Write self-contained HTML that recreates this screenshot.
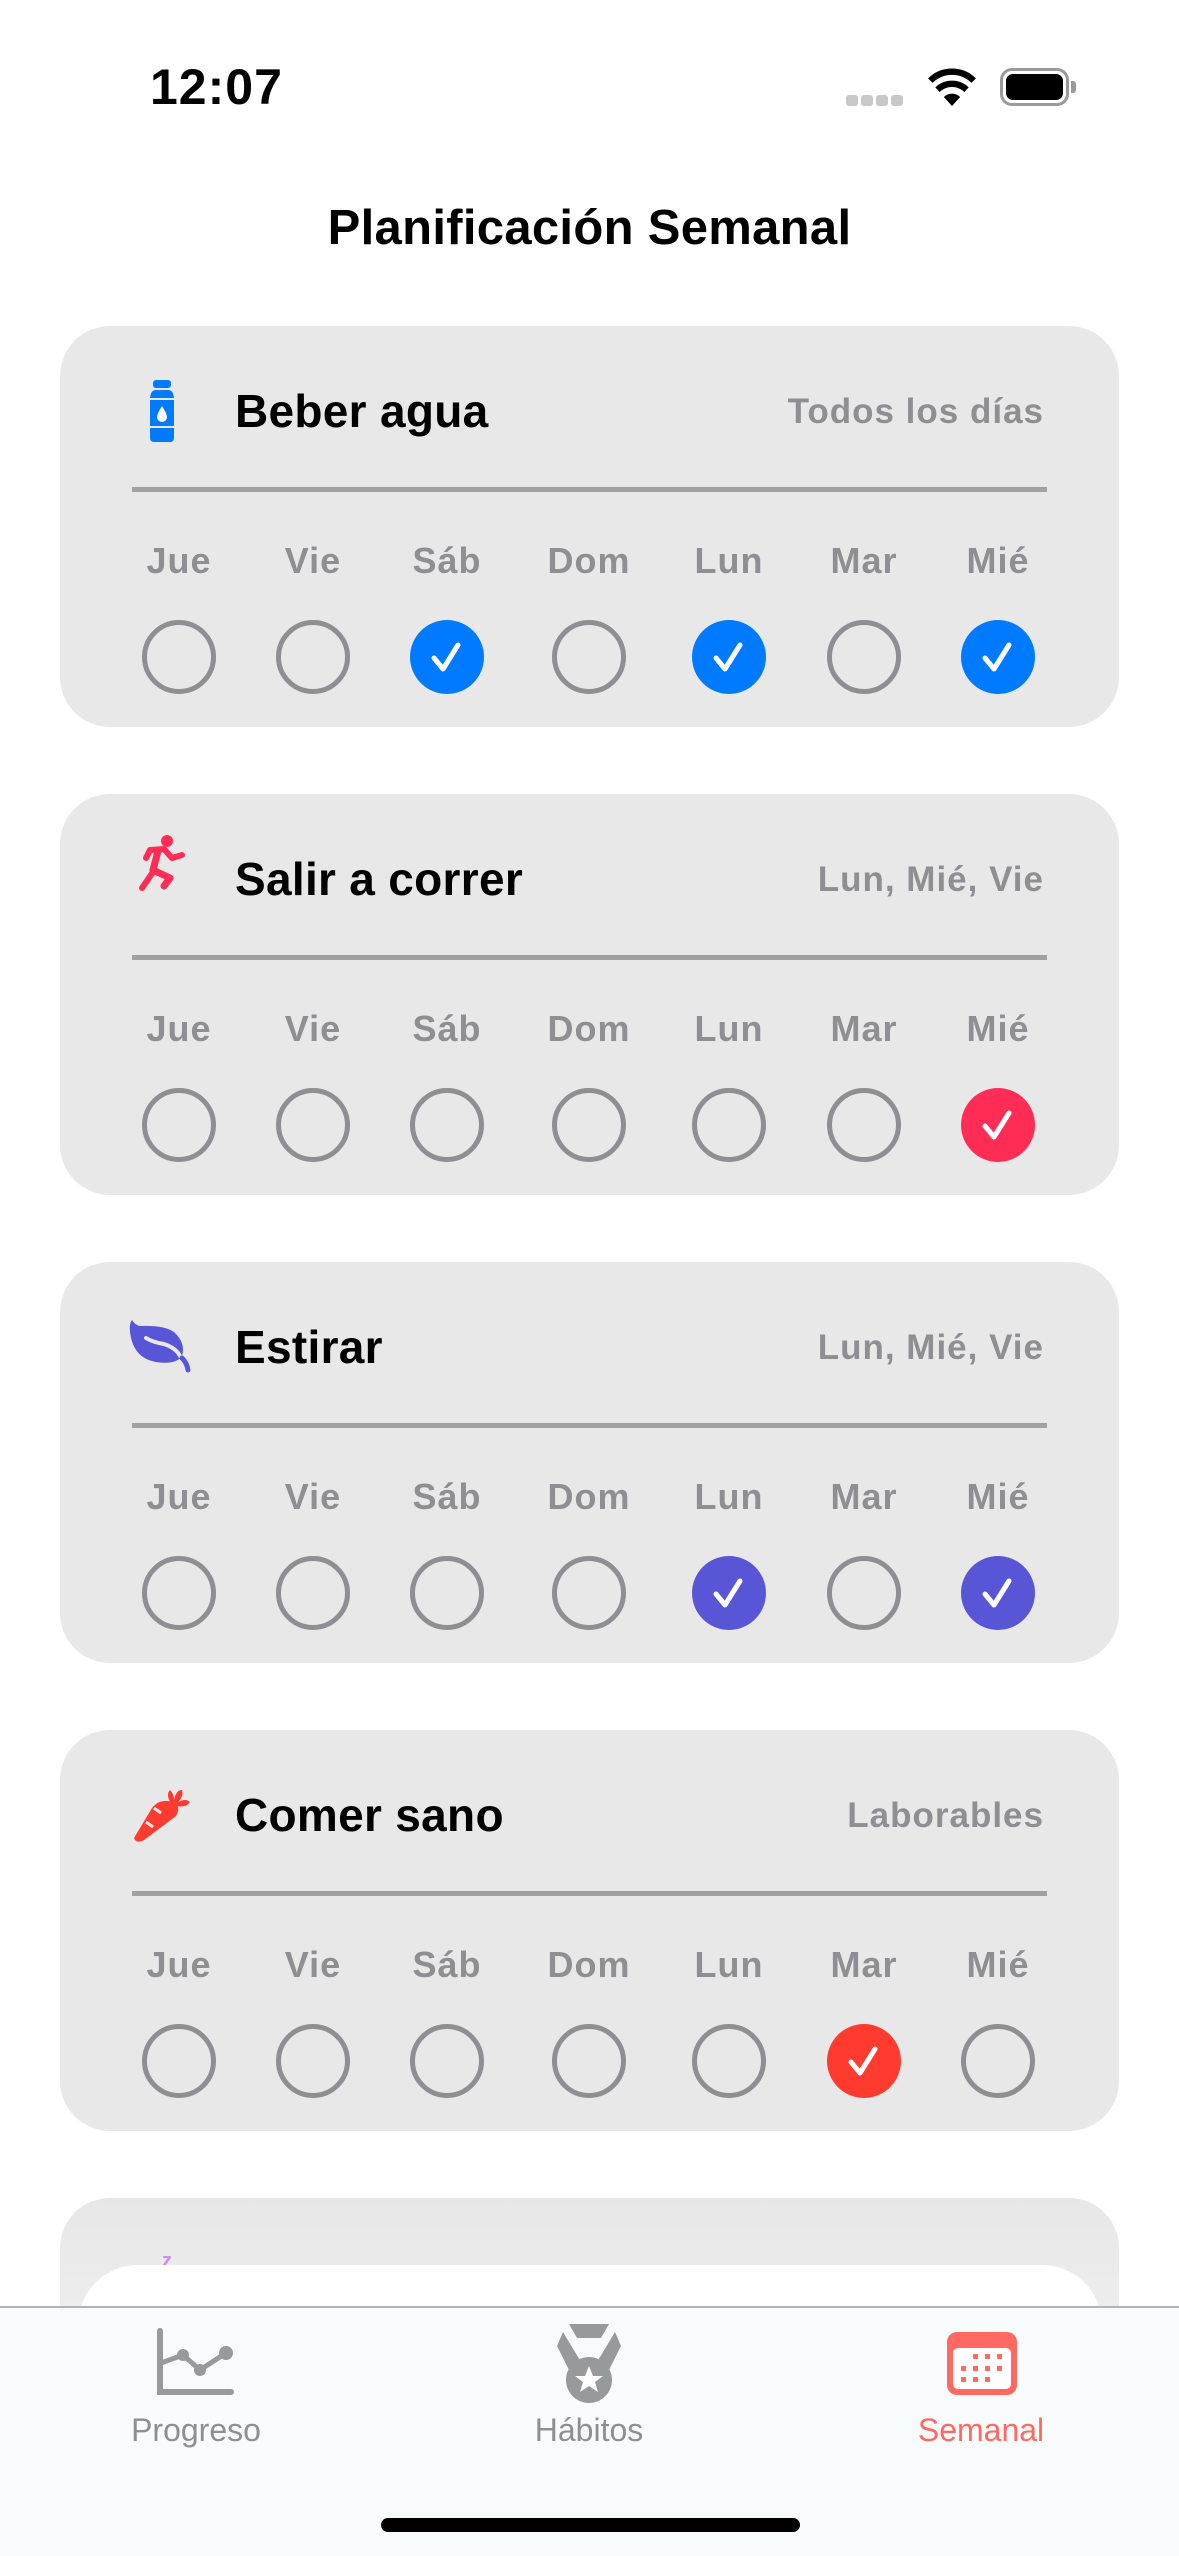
<!DOCTYPE html>
<html><head><meta charset="utf-8">
<style>
*{margin:0;padding:0;box-sizing:border-box}
html,body{width:1179px;height:2556px;overflow:hidden}
body{background:#fff;position:relative;font-family:"Liberation Sans",sans-serif}
.abs{position:absolute}
.card{position:absolute;left:60px;width:1059px;height:401px;background:#e8e8e9;border-radius:50px}
.ttl{position:absolute;left:175px;top:58px;font-size:46px;font-weight:bold;color:#000;letter-spacing:0.3px}
.sub{position:absolute;right:75px;top:66px;font-size:35px;font-weight:bold;color:#8e8e93;letter-spacing:1px}
.div{position:absolute;left:72px;width:915px;top:161px;height:5px;background:#a1a1a3}
.lbl{position:absolute;top:214px;width:120px;margin-left:-60px;text-align:center;font-size:36px;font-weight:bold;color:#8e8e93;letter-spacing:1px}
.c{position:absolute;top:294px;width:74px;height:74px;margin-left:-37px;border-radius:50%;border:5px solid #8e8e93}
.c.on{border:none}
.c.on svg{position:absolute;left:0;top:0}
.tab{position:absolute;font-size:32px;color:#8e8e93;text-align:center;width:240px;margin-left:-120px;top:2412px}
</style></head><body>

<div class="abs" style="left:150px;top:58px;font-size:50px;font-weight:bold;letter-spacing:1px">12:07</div>
<div class="abs" style="left:846px;top:95px;width:12px;height:11px;border-radius:3px;background:#c8c8c8"></div>
<div class="abs" style="left:861px;top:95px;width:12px;height:11px;border-radius:3px;background:#c8c8c8"></div>
<div class="abs" style="left:876px;top:95px;width:12px;height:11px;border-radius:3px;background:#c8c8c8"></div>
<div class="abs" style="left:891px;top:95px;width:12px;height:11px;border-radius:3px;background:#c8c8c8"></div>
<svg class="abs" style="left:926px;top:68px" width="52" height="38" viewBox="0 0 56 42">
<path d="M28 42 L19 32 A13 13 0 0 1 37 32 Z" fill="#000"/>
<path d="M12 24 A23 23 0 0 1 44 24" stroke="#000" stroke-width="7" fill="none"/>
<path d="M4 14 A34 34 0 0 1 52 14" stroke="#000" stroke-width="7" fill="none"/>
</svg>
<div class="abs" style="left:1000px;top:68px;width:69px;height:38px;border:3px solid #9a9a9a;border-radius:12px"></div>
<div class="abs" style="left:1006px;top:74px;width:57px;height:26px;background:#000;border-radius:7px"></div>
<div class="abs" style="left:1071px;top:81px;width:5px;height:12px;background:#9a9a9a;border-radius:0 3px 3px 0"></div>

<div class="abs" style="left:0;width:1179px;top:200px;text-align:center;font-size:49px;font-weight:bold;letter-spacing:0.3px">Planificación Semanal</div>

<div class="card" style="top:326px">
 <svg class="abs" style="left:88px;top:54px" width="28" height="62" viewBox="0 0 28 62">
  <rect x="5" y="0" width="18" height="8" rx="3" fill="#007aff"/>
  <path d="M2 20 Q2 10 8 10 H20 Q26 10 26 20 V58 Q26 62 22 62 H6 Q2 62 2 58 Z" fill="#007aff"/>
  <rect x="2" y="18" width="24" height="2" fill="#e8e8e9"/>
  <rect x="2" y="46" width="24" height="2" fill="#e8e8e9"/>
  <path d="M14 26 Q9 34 9 37 A5 5 0 0 0 19 37 Q19 34 14 26Z" fill="#fff"/>
 </svg>
 <div class="ttl">Beber agua</div><div class="sub">Todos los días</div><div class="div"></div>
 <div class="lbl" style="left:119px">Jue</div><div class="lbl" style="left:253px">Vie</div><div class="lbl" style="left:387px">Sáb</div><div class="lbl" style="left:529px">Dom</div><div class="lbl" style="left:669px">Lun</div><div class="lbl" style="left:804px">Mar</div><div class="lbl" style="left:938px">Mié</div>
 <div class="c" style="left:119px"></div><div class="c" style="left:253px"></div>
 <div class="c on" style="left:387px;background:#007aff"><svg width="74" height="74"><path d="M24 38 L33 49 L48 25" stroke="#fff" stroke-width="5" fill="none" stroke-linecap="round" stroke-linejoin="round"/></svg></div>
 <div class="c" style="left:529px"></div>
 <div class="c on" style="left:669px;background:#007aff"><svg width="74" height="74"><path d="M24 38 L33 49 L48 25" stroke="#fff" stroke-width="5" fill="none" stroke-linecap="round" stroke-linejoin="round"/></svg></div>
 <div class="c" style="left:804px"></div>
 <div class="c on" style="left:938px;background:#007aff"><svg width="74" height="74"><path d="M24 38 L33 49 L48 25" stroke="#fff" stroke-width="5" fill="none" stroke-linecap="round" stroke-linejoin="round"/></svg></div>
</div>

<div class="card" style="top:794px">
 <svg class="abs" style="left:78px;top:40px" width="60" height="60" viewBox="0 0 60 60">
  <circle cx="29" cy="7" r="6" fill="#ff2d55"/>
  <path d="M8 24 L12 16 L26 15 L34 24 L44 21" stroke="#ff2d55" stroke-width="6" fill="none" stroke-linecap="round" stroke-linejoin="round"/>
  <path d="M20 17 L15 36 L32 44 L26 52" stroke="#ff2d55" stroke-width="7" fill="none" stroke-linecap="round" stroke-linejoin="round"/>
  <path d="M15 38 L4 54" stroke="#ff2d55" stroke-width="6" fill="none" stroke-linecap="round"/>
 </svg>
 <div class="ttl">Salir a correr</div><div class="sub">Lun, Mié, Vie</div><div class="div"></div>
 <div class="lbl" style="left:119px">Jue</div><div class="lbl" style="left:253px">Vie</div><div class="lbl" style="left:387px">Sáb</div><div class="lbl" style="left:529px">Dom</div><div class="lbl" style="left:669px">Lun</div><div class="lbl" style="left:804px">Mar</div><div class="lbl" style="left:938px">Mié</div>
 <div class="c" style="left:119px"></div><div class="c" style="left:253px"></div><div class="c" style="left:387px"></div><div class="c" style="left:529px"></div><div class="c" style="left:669px"></div><div class="c" style="left:804px"></div>
 <div class="c on" style="left:938px;background:#ff2d55"><svg width="74" height="74"><path d="M24 38 L33 49 L48 25" stroke="#fff" stroke-width="5" fill="none" stroke-linecap="round" stroke-linejoin="round"/></svg></div>
</div>

<div class="card" style="top:1262px">
 <svg class="abs" style="left:68px;top:56px" width="66" height="56" viewBox="0 0 66 56">
  <path d="M4 2 Q1 6 2 14 Q5 40 28 44 Q48 47 54 38 Q58 25 46 14 Q36 7 12 8 Q7 7 4 2Z" fill="#5856d6"/>
  <path d="M18 20 Q24 24 36 26 Q48 30 52 38 Q58 44 60 50" stroke="#e8e8e9" stroke-width="4" fill="none" stroke-linecap="round"/>
  <path d="M54 40 Q59 45 60 52" stroke="#5856d6" stroke-width="5" fill="none" stroke-linecap="round"/>
 </svg>
 <div class="ttl">Estirar</div><div class="sub">Lun, Mié, Vie</div><div class="div"></div>
 <div class="lbl" style="left:119px">Jue</div><div class="lbl" style="left:253px">Vie</div><div class="lbl" style="left:387px">Sáb</div><div class="lbl" style="left:529px">Dom</div><div class="lbl" style="left:669px">Lun</div><div class="lbl" style="left:804px">Mar</div><div class="lbl" style="left:938px">Mié</div>
 <div class="c" style="left:119px"></div><div class="c" style="left:253px"></div><div class="c" style="left:387px"></div><div class="c" style="left:529px"></div>
 <div class="c on" style="left:669px;background:#5856d6"><svg width="74" height="74"><path d="M24 38 L33 49 L48 25" stroke="#fff" stroke-width="5" fill="none" stroke-linecap="round" stroke-linejoin="round"/></svg></div>
 <div class="c" style="left:804px"></div>
 <div class="c on" style="left:938px;background:#5856d6"><svg width="74" height="74"><path d="M24 38 L33 49 L48 25" stroke="#fff" stroke-width="5" fill="none" stroke-linecap="round" stroke-linejoin="round"/></svg></div>
</div>

<div class="card" style="top:1730px">
 <svg class="abs" style="left:70px;top:54px" width="60" height="60" viewBox="0 0 60 60">
  <path d="M42 18 Q52 22 46 32 L14 56 Q6 60 4 54 L22 24 Q30 14 42 18Z" fill="#ff3b30"/>
  <path d="M40 18 Q36 10 40 6 Q44 10 44 16 Q46 6 52 6 Q54 12 48 18 Q56 14 60 18 Q56 24 46 22Z" fill="#ff3b30"/>
  <path d="M24 24 L31 29 M16 38 L23 43" stroke="#e8e8e9" stroke-width="3"/>
 </svg>
 <div class="ttl">Comer sano</div><div class="sub">Laborables</div><div class="div"></div>
 <div class="lbl" style="left:119px">Jue</div><div class="lbl" style="left:253px">Vie</div><div class="lbl" style="left:387px">Sáb</div><div class="lbl" style="left:529px">Dom</div><div class="lbl" style="left:669px">Lun</div><div class="lbl" style="left:804px">Mar</div><div class="lbl" style="left:938px">Mié</div>
 <div class="c" style="left:119px"></div><div class="c" style="left:253px"></div><div class="c" style="left:387px"></div><div class="c" style="left:529px"></div><div class="c" style="left:669px"></div>
 <div class="c on" style="left:804px;background:#ff3b30"><svg width="74" height="74"><path d="M24 38 L33 49 L48 25" stroke="#fff" stroke-width="5" fill="none" stroke-linecap="round" stroke-linejoin="round"/></svg></div>
 <div class="c" style="left:938px"></div>
</div>

<div class="card" style="top:2198px;height:200px;background:linear-gradient(#e7e7e7,#f2f2f2)"></div>
<div class="abs" style="left:162px;top:2250px;font-size:20px;font-weight:bold;color:#cf8cf0">z</div>
<div class="abs" style="left:78px;top:2265px;width:1024px;height:120px;background:#fff;border-radius:60px 60px 0 0"></div>

<div class="abs" style="left:0;top:2306px;width:1179px;height:260px;background:#f7fbfc;border-top:2px solid #b3b3b3"></div>
<svg class="abs" style="left:155px;top:2328px" width="80" height="68" viewBox="0 0 80 68">
 <path d="M5 3 V64 H76" stroke="#979a9a" stroke-width="6" fill="none" stroke-linecap="round"/>
 <path d="M6 35 L28 27 L45 42 L71 25" stroke="#979a9a" stroke-width="5" fill="none"/>
 <circle cx="28" cy="27" r="6" fill="#979a9a"/><circle cx="45" cy="42" r="6" fill="#979a9a"/><circle cx="71" cy="25" r="7" fill="#979a9a"/>
</svg>
<svg class="abs" style="left:555px;top:2324px" width="68" height="80" viewBox="0 0 68 80">
 <path d="M14 0 H54 L46 14 H22 Z" fill="#979a9a"/>
 <path d="M8 8 L2 22 L14 46 L26 38 Z" fill="#979a9a"/>
 <path d="M60 8 L66 22 L54 46 L42 38 Z" fill="#979a9a"/>
 <circle cx="34" cy="56" r="23" fill="#979a9a"/>
 <path d="M34 42 L38 52 L48 52 L40 58 L43 68 L34 62 L25 68 L28 58 L20 52 L30 52Z" fill="#fff"/>
</svg>
<svg class="abs" style="left:947px;top:2332px" width="70" height="63" viewBox="0 0 70 63">
 <rect x="0" y="0" width="70" height="63" rx="10" fill="#ff6961"/>
 <rect x="6" y="16" width="58" height="41" rx="5" fill="#fff"/>
 <g fill="#ff6961">
  <rect x="26" y="22" width="5" height="5"/><rect x="38" y="22" width="5" height="5"/><rect x="50" y="22" width="5" height="5"/>
  <rect x="14" y="34" width="5" height="5"/><rect x="26" y="34" width="5" height="5"/><rect x="38" y="34" width="5" height="5"/><rect x="50" y="34" width="5" height="5"/>
  <rect x="14" y="45" width="5" height="5"/><rect x="26" y="45" width="5" height="5"/><rect x="38" y="45" width="5" height="5"/>
 </g>
</svg>
<div class="tab" style="left:196px">Progreso</div>
<div class="tab" style="left:589px">Hábitos</div>
<div class="tab" style="left:981px;color:#ff6961">Semanal</div>
<div class="abs" style="left:381px;top:2518px;width:419px;height:14px;background:#000;border-radius:7px"></div>
</body></html>
